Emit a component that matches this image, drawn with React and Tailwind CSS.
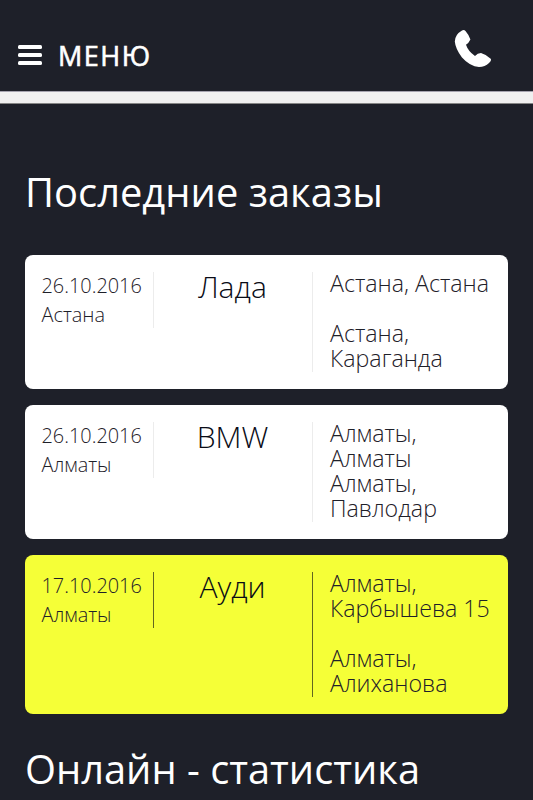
const orders = [
  { date: '26.10.2016', city: 'Астана', car: 'Лада', route: 'Астана, Астана\n\nАстана,\nКараганда', h: 'h-[133.5px]' },
  { date: '26.10.2016', city: 'Алматы', car: 'BMW', route: 'Алматы,\nАлматы\nАлматы,\nПавлодар', h: 'h-[133.5px]' },
  { date: '17.10.2016', city: 'Алматы', car: 'Ауди', route: 'Алматы,\nКарбышева 15\n\nАлматы,\nАлиханова', hot: true, h: 'h-[158.5px]' },
];

function Order({ o }) {
  const line = o.hot ? 'border-[#62661f]' : 'border-[#ececec]';
  return (
    <div className={`flex rounded-[8px] pl-[16.5px] pt-[17px] pb-[17px] ${o.h} ${o.hot ? 'bg-[#f5ff37]' : 'bg-white'}`}>
      <div className={`w-[112px] h-[56px] shrink-0 border-r text-[19.9px] text-[#1e2029] ${line}`}>
        <div className="leading-[28.5px] whitespace-nowrap">{o.date}</div>
        <div className="leading-[28.5px]">{o.city}</div>
      </div>
      <div className={`w-[159px] shrink-0 border-r text-center text-[30px] leading-[30px] text-[#090b16] ${line}`}>{o.car}</div>
      <p className="-mt-[1px] pl-[17.5px] text-[23.2px] leading-[25px] whitespace-pre text-[#1e2029]">{o.route}</p>
    </div>
  );
}

export default function App() {
  return (
    <div className="w-[533px] h-[800px] overflow-hidden bg-[#1e2029] font-['Open_Sans',sans-serif] font-light">
      <header className="h-[91px] flex justify-between text-white">
        <div className="flex items-center h-[28px] mt-[41px] ml-[18px]">
          <div className="flex flex-col gap-[4px] w-[24px]">
            <div className="h-[4px] rounded-[1.5px] bg-white" />
            <div className="h-[4px] rounded-[1.5px] bg-white" />
            <div className="h-[4px] rounded-[1.5px] bg-white" />
          </div>
          <span className="ml-[16px] pt-[1px] text-[27px] leading-[28px] font-normal tracking-[1.5px] [-webkit-text-stroke:0.6px_white]">МЕНЮ</span>
        </div>
        <svg className="w-[38px] h-[38px] mt-[29px] mr-[41px]" viewBox="0 0 38 38" fill="#fff">
          <path d="M8 1.5 Q10 .3 11.5 2 Q15 6 16.4 10.5 Q14.5 14.5 12 15.7 Q14 22 21 27 Q23.5 24.2 27 24 Q32.5 25.5 37 30 Q37.5 32 35 34 Q31 38 25 38 Q16 37.5 8 28.5 Q1.5 20 .8 12.5 Q1 5.5 8 1.5Z" />
        </svg>
      </header>
      <div className="h-[13px] bg-[#f0f0f0] border-t border-b border-t-[#a5a3af] border-b-[#858585]" />
      <main className="px-[25px]">
        <h1 className="pt-[61px] h-[151px] text-[39.9px] leading-[54px] font-normal text-white whitespace-nowrap">Последние заказы</h1>
        <div className="flex flex-col gap-[16.5px]">
          {orders.map((o, i) => <Order key={i} o={o} />)}
        </div>
        <h1 className="pt-[28.5px] text-[39.85px] leading-[54px] font-normal text-white whitespace-nowrap">Онлайн - статистика</h1>
      </main>
    </div>
  );
}
